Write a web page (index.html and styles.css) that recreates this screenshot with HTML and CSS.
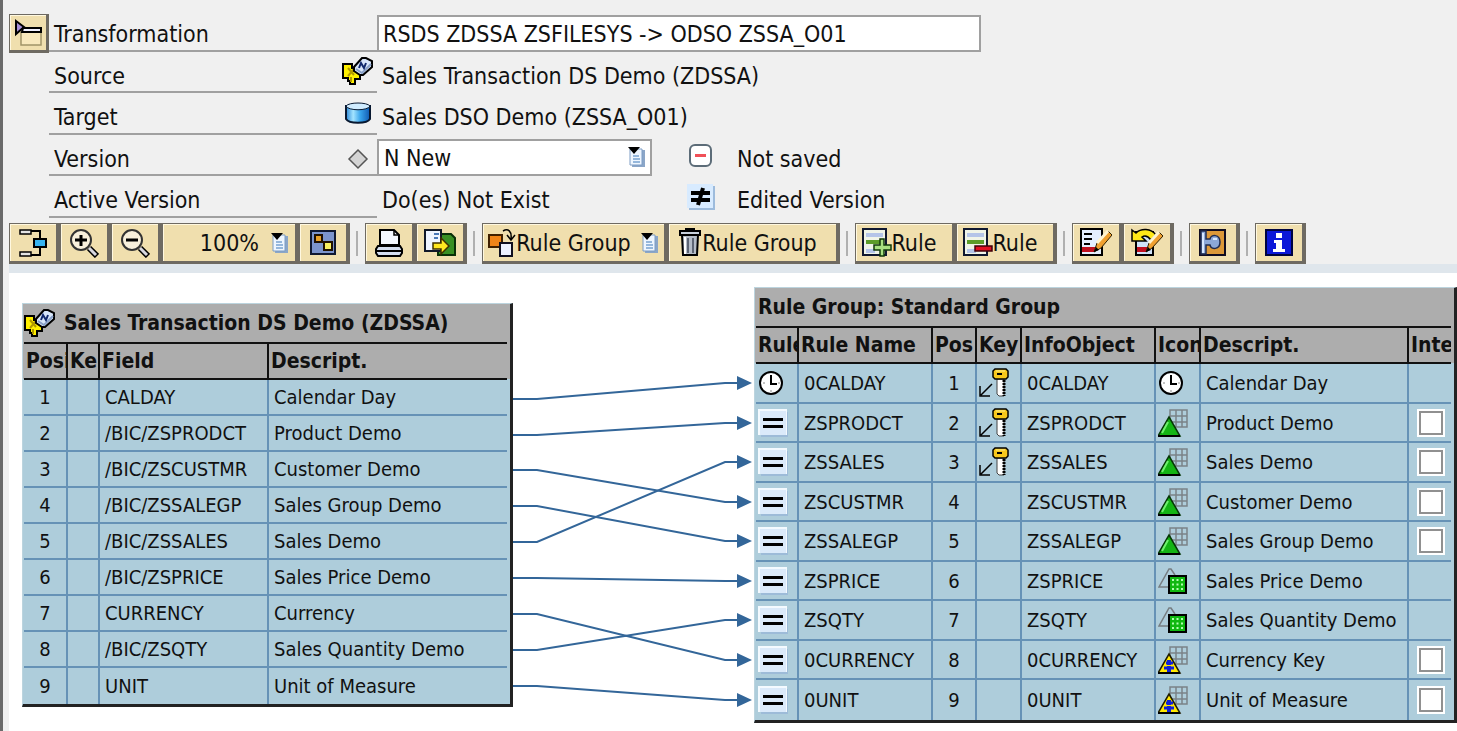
FILE: index.html
```html
<!DOCTYPE html>
<html lang="en">
<head>
    <meta charset="UTF-8">
    <meta name="viewport" content="width=device-width, initial-scale=1.0">
    <title>Transformation RSDS ZDSSA ZSFILESYS</title>
    <link rel="stylesheet" href="styles.css">
</head>
<body>

    <!-- Icons that are used more than once -->
    <svg class="sprite" aria-hidden="true">
        <symbol id="datasource" viewBox="0 0 32 29">
            <path d="M1 7h9v4h8v11h-5v5h-5v-3H6v-3H1z" fill="#fff000" stroke="#000" stroke-width="2"/>
            <path d="M6 11l6 7M12 12l-6 7M9 20v5" fill="none" stroke="#b09800" stroke-width="2"/>
            <path d="M20 1h4l6 3v6l-9 8h-3l-6-4v-4z" fill="#d8e6fa" stroke="#000" stroke-width="2"/>
            <path d="M29 7l-9 9-6-4" fill="none" stroke="#88a0c8" stroke-width="2"/>
            <path d="M17 11l2-5 3 5 2-5" fill="none" stroke="#10286c" stroke-width="2"/>
        </symbol>
        <symbol id="list" viewBox="0 0 18 22">
            <path d="M5 4h12v17H4z" fill="#8ba6c8"/>
            <path d="M2 3h12v16H2z" fill="#eef6ff" stroke="#7c9cc4" stroke-width="1"/>
            <path d="M5 10h6M5 13h7M5 16h7" stroke="#3c78b8" stroke-width="1"/>
            <path d="M0 1h12L6 8z" fill="#000"/>
        </symbol>
        <symbol id="clock" viewBox="0 0 26 26">
            <circle cx="13" cy="13" r="11" fill="#fff" stroke="#000" stroke-width="2"/>
            <path d="M13 5v9h6" fill="none" stroke="#000" stroke-width="2"/>
            <path d="M13 22v-2M5 13h2M20 13h2" stroke="#888" stroke-width="1"/>
        </symbol>
        <symbol id="equal" viewBox="0 0 30 28">
            <path d="M3 3h27v25H3z" fill="#9dbbd8"/>
            <path d="M0 0h29v26H0z" fill="#f4faff"/>
            <path d="M2 2h26v24H2z" fill="#dbeafa"/>
            <path d="M5 10.500h20M5 17.500h20" stroke="#000" stroke-width="3"/>
        </symbol>
        <symbol id="key" viewBox="0 0 30 30">
            <path d="M13 16L2 27M1 18v10h10" fill="none" stroke="#000" stroke-width="1.500"/>
            <path d="M18 11h7v17h-5l-2-2z" fill="#fff" stroke="#444" stroke-width="1"/>
            <path d="M25 12v16" stroke="#000" stroke-width="3" stroke-dasharray="2 1"/>
            <path d="M16 1h11l2 2v6l-2 2H16l-2-2V3z" fill="#f8c81c" stroke="#000" stroke-width="1.500"/>
            <path d="M17 3h9" stroke="#fff090" stroke-width="1"/>
            <path d="M18 5h5v2h-5z" fill="#000"/>
        </symbol>
        <symbol id="characteristic" viewBox="0 0 30 28">
            <path d="M12 1h17v17H12zM18 1v17M24 1v17M12 7h17M12 13h17" fill="none" stroke="#7b8288" stroke-width="1.500"/>
            <path d="M11 8l11 19H0z" fill="#14b414" stroke="#063806" stroke-width="1.500"/>
            <path d="M10 13L4 24" stroke="#70f070" stroke-width="2"/>
            <path d="M0 27h22" stroke="#000" stroke-width="2"/>
        </symbol>
        <symbol id="keyfigure" viewBox="0 0 30 28">
            <path d="M10 20H1L11 2h2l4 6" fill="none" stroke="#777d82" stroke-width="1.500"/>
            <path d="M11 9h17v17H11z" fill="#10b810" stroke="#000" stroke-width="2"/>
            <path d="M14 13h12M14 17.500h12M14 22h12" stroke="#b0ffb0" stroke-width="2" stroke-dasharray="2 2.500"/>
        </symbol>
        <symbol id="unit" viewBox="0 0 30 28">
            <path d="M12 1h17v17H12zM18 1v17M24 1v17M12 7h17M12 13h17" fill="none" stroke="#7b8288" stroke-width="1.500"/>
            <path d="M11 8l11 19H0z" fill="#ffe800" stroke="#201c00" stroke-width="1.500"/>
            <path d="M11 14v12" stroke="#1020d8" stroke-width="4"/>
            <path d="M8 17h7M6 22h10" stroke="#1020d8" stroke-width="3"/>
            <path d="M8 19.500h7" stroke="#ffe800" stroke-width="1"/>
            <path d="M0 27h22" stroke="#000" stroke-width="2"/>
        </symbol>
    </svg>

    <header class="properties">
        <div class="prop-row">
            <button class="tool tool-small" type="button" aria-label="Switch display">
                <svg width="28" height="28" viewBox="0 0 28 28">
                    <path d="M7 13v13h20V13" fill="#f8e8bc" stroke="#a09468" stroke-width="1.500"/>
                    <path d="M2 2l8 6-8 7z" fill="#a890d8" stroke="#000" stroke-width="2"/>
                    <path d="M9 9h18v4H8z" fill="#f0f0ff" stroke="#000" stroke-width="2"/>
                </svg>
            </button>
            <label class="prop-label" for="transformation">Transformation</label>
            <input class="prop-input" id="transformation" type="text" value="RSDS ZDSSA ZSFILESYS -&gt; ODSO ZSSA_O01" readonly>
        </div>
        <div class="prop-row">
            <div class="prop-label">Source <svg width="32" height="29"><use href="#datasource"/></svg></div>
            <span class="prop-value">Sales Transaction DS Demo (ZDSSA)</span>
        </div>
        <div class="prop-row">
            <div class="prop-label">Target
                <svg class="icon-cube" width="26" height="22" viewBox="0 0 26 22">
                    <defs>
                        <linearGradient id="cube">
                            <stop offset="0" stop-color="#2c88d8"/>
                            <stop offset=".3" stop-color="#a4e4ff"/>
                            <stop offset=".6" stop-color="#38a4ec"/>
                            <stop offset="1" stop-color="#1058b0"/>
                        </linearGradient>
                    </defs>
                    <path d="M1 4v13c3 5 21 5 24 0V4z" fill="url(#cube)" stroke="#081830" stroke-width="2"/>
                    <path d="M1 4c3-4 21-4 24 0-2 5-22 5-24 0z" fill="#d0ecff" stroke="#081830" stroke-width="1"/>
                </svg>
            </div>
            <span class="prop-value">Sales DSO Demo (ZSSA_O01)</span>
        </div>
        <div class="prop-row">
            <label class="prop-label" for="version">Version
                <svg class="icon-state" width="22" height="22" viewBox="0 0 22 22">
                    <path d="M11 2l9 9-9 9-9-9z" fill="#d4d4d4" stroke="#555" stroke-width="1.500"/>
                </svg>
            </label>
            <div class="select-wrap">
                <select id="version">
                    <option>N New</option>
                </select>
                <svg class="select-icon" width="18" height="22"><use href="#list"/></svg>
            </div>
            <svg class="status-icon" width="28" height="26" viewBox="0 0 28 26">
                <rect x="3" y="2" width="21" height="21" rx="5" fill="#fff" stroke="#5c6c78" stroke-width="2"/>
                <path d="M8 12.500h11" stroke="#f05058" stroke-width="3"/>
            </svg>
            <span class="status-text">Not saved</span>
        </div>
        <div class="prop-row">
            <div class="prop-label">Active Version</div>
            <span class="prop-value prop-fixed">Do(es) Not Exist</span>
            <svg class="status-icon" width="28" height="26" viewBox="0 0 28 26">
                <path d="M2 2h26v24H2z" fill="#9dbbdc"/>
                <path d="M0 0h26v24H0z" fill="#d8ebff"/>
                <path d="M4 9h19M4 16h19" stroke="#000" stroke-width="4"/>
                <path d="M16 4l-5 17" stroke="#000" stroke-width="4"/>
            </svg>
            <span class="status-text">Edited Version</span>
        </div>
    </header>

    <nav class="toolbar" aria-label="Transformation tools">
        <div class="group">
            <button class="tool" type="button" aria-label="Navigation">
                <svg width="30" height="30" viewBox="0 0 30 30">
                    <path d="M13 3h9v8M22 19v8h-9" fill="none" stroke="#000" stroke-width="2"/>
                    <path d="M2 2h11v4H2zM2 24h11v4H2z" fill="#e4e4e4" stroke="#000" stroke-width="1.500"/>
                    <path d="M16 11h12v8H16z" fill="#38b4f0" stroke="#000" stroke-width="2"/>
                </svg>
            </button>
            <button class="tool" type="button" aria-label="Zoom in">
                <svg width="30" height="30" viewBox="0 0 30 30">
                    <path d="M20 20l8 8" stroke="#000" stroke-width="6"/>
                    <path d="M20 20l7 7" stroke="#d8d8e0" stroke-width="3"/>
                    <circle cx="12" cy="12" r="10" fill="#f8f0dc" stroke="#333" stroke-width="2"/>
                    <path d="M12 7v11M6 12h12" stroke="#000" stroke-width="3"/>
                </svg>
            </button>
            <button class="tool" type="button" aria-label="Zoom out">
                <svg width="30" height="30" viewBox="0 0 30 30">
                    <path d="M20 20l8 8" stroke="#000" stroke-width="6"/>
                    <path d="M20 20l7 7" stroke="#d8d8e0" stroke-width="3"/>
                    <circle cx="12" cy="12" r="10" fill="#f8f0dc" stroke="#333" stroke-width="2"/>
                    <path d="M6 12h12" stroke="#000" stroke-width="3"/>
                </svg>
            </button>
            <button class="tool tool-zoom" type="button">100% <svg width="18" height="22"><use href="#list"/></svg></button>
            <button class="tool" type="button" aria-label="Overview">
                <svg width="26" height="26" viewBox="0 0 26 26">
                    <path d="M1 1h24v23H1z" fill="#7c94cc" stroke="#101830" stroke-width="2"/>
                    <path d="M5 5h7v7H5z" fill="#e8a028" stroke="#201000" stroke-width="2"/>
                    <path d="M14 12h8v8h-8z" fill="#f8f060" stroke="#201000" stroke-width="2"/>
                </svg>
            </button>
        </div>
        <span class="separator"></span>
        <div class="group">
            <button class="tool" type="button" aria-label="Print">
                <svg width="28" height="30" viewBox="0 0 28 30">
                    <path d="M5 17V2h14l5 5v10z" fill="#f4f8ff" stroke="#000" stroke-width="2"/>
                    <path d="M19 2v5h5" fill="none" stroke="#000" stroke-width="1.500"/>
                    <path d="M3 18h22l2 3v4l-2 3H3l-2-3v-4z" fill="#d4def0" stroke="#000" stroke-width="2"/>
                    <path d="M1 23h26" stroke="#000" stroke-width="2"/>
                </svg>
            </button>
            <button class="tool" type="button" aria-label="Export">
                <svg width="32" height="30" viewBox="0 0 32 30">
                    <path d="M14 6h13l4 4v17H14z" fill="#389024" stroke="#083008" stroke-width="2"/>
                    <path d="M1 2h16v21H1z" fill="#eef4ff" stroke="#101828" stroke-width="2"/>
                    <path d="M10 6h5M10 10h4" stroke="#4878b8" stroke-width="2"/>
                    <path d="M9 15h8v-5l8 8-8 8v-5H9z" fill="#ffe820" stroke="#403000" stroke-width="1.500"/>
                </svg>
            </button>
        </div>
        <span class="separator"></span>
        <div class="group">
            <button class="tool tool-create" type="button">
                <svg width="28" height="30" viewBox="0 0 28 30">
                    <path d="M1 7h13v12H1z" fill="#f08418" stroke="#402000" stroke-width="2"/>
                    <path d="M12 15h12v13H12z" fill="#eef2ff" stroke="#101020" stroke-width="2"/>
                    <path d="M15 3c5-3 9 0 8 8M19 7l4 5 4-5" fill="none" stroke="#000" stroke-width="1.500"/>
                </svg>Rule Group
                <svg class="list-icon" width="18" height="22"><use href="#list"/></svg>
            </button>
            <button class="tool tool-delete" type="button">
                <svg width="24" height="30" viewBox="0 0 24 30">
                    <path d="M4 7h16l-1 20H5z" fill="#b4bcc8" stroke="#000" stroke-width="2"/>
                    <path d="M10 10v15M15 10v15" stroke="#5c6474" stroke-width="2"/>
                    <path d="M7 9v17" stroke="#fff" stroke-width="2"/>
                    <path d="M2 3h20v4H2z" fill="#c8d0dc" stroke="#000" stroke-width="2"/>
                    <path d="M8 3V1h8v2" fill="none" stroke="#000" stroke-width="2"/>
                </svg>Rule Group
            </button>
        </div>
        <span class="separator"></span>
        <div class="group">
            <button class="tool tool-rule" type="button">
                <svg width="30" height="30" viewBox="0 0 30 30">
                    <path d="M1 1h23v26H1z" fill="#f0f4e8" stroke="#101830" stroke-width="2"/>
                    <path d="M4 7h17M4 23h9" stroke="#b4c4e8" stroke-width="4"/>
                    <path d="M4 14h17" stroke="#5c9c28" stroke-width="4"/>
                    <path d="M18 11h4v6h7v5h-7v6h-4v-6h-6v-5h6z" fill="#a8e080" stroke="#103808" stroke-width="1.500"/>
                </svg>Rule
            </button>
            <button class="tool tool-rule" type="button">
                <svg width="30" height="30" viewBox="0 0 30 30">
                    <path d="M1 1h23v26H1z" fill="#f0f4e8" stroke="#101830" stroke-width="2"/>
                    <path d="M4 7h17M4 23h9" stroke="#b4c4e8" stroke-width="4"/>
                    <path d="M4 14h17" stroke="#5c9c28" stroke-width="4"/>
                    <path d="M12 18h17v5H12z" fill="#e01020" stroke="#400008" stroke-width="1.500"/>
                </svg>Rule
            </button>
        </div>
        <span class="separator"></span>
        <div class="group">
            <button class="tool" type="button" aria-label="Start routine">
                <svg width="32" height="30" viewBox="0 0 32 30">
                    <path d="M1 1h21v26H1z" fill="#e4eeff" stroke="#000" stroke-width="2"/>
                    <path d="M4 6h8M4 11h8M4 16h6" stroke="#000" stroke-width="2"/>
                    <path d="M2 19h13v5H2z" fill="#c01020"/>
                    <path d="M14 24l3-9L28 3l4 4-11 13z" fill="#f0a030" stroke="#302000" stroke-width="1"/>
                    <path d="M17 15L28 3" fill="none" stroke="#fff4d0" stroke-width="3"/>
                    <path d="M14 24l2-5 3 3z" fill="#000"/>
                </svg>
            </button>
            <button class="tool" type="button" aria-label="End routine">
                <svg width="32" height="30" viewBox="0 0 32 30">
                    <path d="M5 4h17v23H5z" fill="#cfe2f8" stroke="#000" stroke-width="2"/>
                    <path d="M6 19h10v5H6z" fill="#c01020"/>
                    <path d="M1 2l4 3c5-5 15-5 20 2l-5 5c-3-4-6-5-9-3l4 4H1z" fill="#ffe818" stroke="#000" stroke-width="1.500"/>
                    <path d="M15 24l3-9L28 4l4 4-11 12z" fill="#f0a030" stroke="#302000" stroke-width="1"/>
                    <path d="M18 15l10-11" fill="none" stroke="#fff4d0" stroke-width="3"/>
                    <path d="M15 24l2-5 3 3z" fill="#000"/>
                </svg>
            </button>
        </div>
        <span class="separator"></span>
        <div class="group">
            <button class="tool" type="button" aria-label="Expert routine">
                <svg width="28" height="28" viewBox="0 0 28 28">
                    <path d="M1 1h25v25H1z" fill="#dc9838" stroke="#100c20" stroke-width="2"/>
                    <path d="M2 2h5v8h4c1-5 10-5 10 3s-9 8-10 3H7v9H2z" fill="#8ca8d8" stroke="#202c50" stroke-width="1.500"/>
                    <path d="M14 10h4M4 4v20" stroke="#d8e8ff" stroke-width="2"/>
                </svg>
            </button>
        </div>
        <span class="separator"></span>
        <div class="group">
            <button class="tool" type="button" aria-label="Information">
                <svg width="28" height="28" viewBox="0 0 28 28">
                    <path d="M1 1h26v25H1z" fill="#0c18d8" stroke="#000440" stroke-width="2"/>
                    <path d="M11 4h6v5h-6zM9 11h8v9h3v3H8v-3h3v-6H9z" fill="#fff"/>
                </svg>
            </button>
        </div>
    </nav>

    <main class="canvas">
        <section class="panel source">
            <h2><svg width="32" height="29"><use href="#datasource"/></svg>Sales Transaction DS Demo (ZDSSA)</h2>
            <table>
                <colgroup><col class="c-pos"><col class="c-key"><col class="c-field"><col></colgroup>
                <thead>
                    <tr><th>Posi</th><th>Ke</th><th>Field</th><th>Descript.</th></tr>
                </thead>
                <tbody>
                    <tr><td>1</td><td></td><td>CALDAY</td><td>Calendar Day</td></tr>
                    <tr><td>2</td><td></td><td>/BIC/ZSPRODCT</td><td>Product Demo</td></tr>
                    <tr><td>3</td><td></td><td>/BIC/ZSCUSTMR</td><td>Customer Demo</td></tr>
                    <tr><td>4</td><td></td><td>/BIC/ZSSALEGP</td><td>Sales Group Demo</td></tr>
                    <tr><td>5</td><td></td><td>/BIC/ZSSALES</td><td>Sales Demo</td></tr>
                    <tr><td>6</td><td></td><td>/BIC/ZSPRICE</td><td>Sales Price Demo</td></tr>
                    <tr><td>7</td><td></td><td>CURRENCY</td><td>Currency</td></tr>
                    <tr><td>8</td><td></td><td>/BIC/ZSQTY</td><td>Sales Quantity Demo</td></tr>
                    <tr><td>9</td><td></td><td>UNIT</td><td>Unit of Measure</td></tr>
                </tbody>
            </table>
        </section>

        <!-- Field to rule connections -->
        <svg class="links" viewBox="0 0 241 435" preserveAspectRatio="none" aria-hidden="true">
            <defs>
                <marker id="arrow" markerUnits="userSpaceOnUse" markerWidth="15" markerHeight="14" refX="0" refY="7">
                    <path d="M0 0l15 7-15 7z" fill="#336699"/>
                </marker>
            </defs>
            <path d="M0 112h24L212 96h12"/>
            <path d="M0 148h24L212 136h12"/>
            <path d="M0 183h24L212 215h12"/>
            <path d="M0 219h24L212 254h12"/>
            <path d="M0 255h24L212 175h12"/>
            <path d="M0 291h24L212 294h12"/>
            <path d="M0 327h24L212 373h12"/>
            <path d="M0 363h24L212 333h12"/>
            <path d="M0 399h24L212 413h12"/>
        </svg>

        <section class="panel target">
            <h2>Rule Group: Standard Group</h2>
            <table>
                <colgroup><col class="c-rule"><col class="c-name"><col class="c-pos"><col class="c-icon"><col class="c-name"><col class="c-icon"><col><col class="c-int"></colgroup>
                <thead>
                    <tr><th>Rule</th><th>Rule Name</th><th>Pos</th><th>Key</th><th>InfoObject</th><th>Icon</th><th>Descript.</th><th>Inte</th></tr>
                </thead>
                <tbody>
                    <tr>
                        <td><svg width="26" height="26"><use href="#clock"/></svg></td>
                        <td>0CALDAY</td><td>1</td>
                        <td><svg width="30" height="30"><use href="#key"/></svg></td>
                        <td>0CALDAY</td>
                        <td><svg width="26" height="26"><use href="#clock"/></svg></td>
                        <td>Calendar Day</td><td></td>
                    </tr>
                    <tr>
                        <td><svg width="30" height="28"><use href="#equal"/></svg></td>
                        <td>ZSPRODCT</td><td>2</td>
                        <td><svg width="30" height="30"><use href="#key"/></svg></td>
                        <td>ZSPRODCT</td>
                        <td><svg width="30" height="28"><use href="#characteristic"/></svg></td>
                        <td>Product Demo</td>
                        <td><input type="checkbox" aria-label="Integrity ZSPRODCT"></td>
                    </tr>
                    <tr>
                        <td><svg width="30" height="28"><use href="#equal"/></svg></td>
                        <td>ZSSALES</td><td>3</td>
                        <td><svg width="30" height="30"><use href="#key"/></svg></td>
                        <td>ZSSALES</td>
                        <td><svg width="30" height="28"><use href="#characteristic"/></svg></td>
                        <td>Sales Demo</td>
                        <td><input type="checkbox" aria-label="Integrity ZSSALES"></td>
                    </tr>
                    <tr>
                        <td><svg width="30" height="28"><use href="#equal"/></svg></td>
                        <td>ZSCUSTMR</td><td>4</td><td></td>
                        <td>ZSCUSTMR</td>
                        <td><svg width="30" height="28"><use href="#characteristic"/></svg></td>
                        <td>Customer Demo</td>
                        <td><input type="checkbox" aria-label="Integrity ZSCUSTMR"></td>
                    </tr>
                    <tr>
                        <td><svg width="30" height="28"><use href="#equal"/></svg></td>
                        <td>ZSSALEGP</td><td>5</td><td></td>
                        <td>ZSSALEGP</td>
                        <td><svg width="30" height="28"><use href="#characteristic"/></svg></td>
                        <td>Sales Group Demo</td>
                        <td><input type="checkbox" aria-label="Integrity ZSSALEGP"></td>
                    </tr>
                    <tr>
                        <td><svg width="30" height="28"><use href="#equal"/></svg></td>
                        <td>ZSPRICE</td><td>6</td><td></td>
                        <td>ZSPRICE</td>
                        <td><svg width="30" height="28"><use href="#keyfigure"/></svg></td>
                        <td>Sales Price Demo</td><td></td>
                    </tr>
                    <tr>
                        <td><svg width="30" height="28"><use href="#equal"/></svg></td>
                        <td>ZSQTY</td><td>7</td><td></td>
                        <td>ZSQTY</td>
                        <td><svg width="30" height="28"><use href="#keyfigure"/></svg></td>
                        <td>Sales Quantity Demo</td><td></td>
                    </tr>
                    <tr>
                        <td><svg width="30" height="28"><use href="#equal"/></svg></td>
                        <td>0CURRENCY</td><td>8</td><td></td>
                        <td>0CURRENCY</td>
                        <td><svg width="30" height="28"><use href="#unit"/></svg></td>
                        <td>Currency Key</td>
                        <td><input type="checkbox" aria-label="Integrity 0CURRENCY"></td>
                    </tr>
                    <tr>
                        <td><svg width="30" height="28"><use href="#equal"/></svg></td>
                        <td>0UNIT</td><td>9</td><td></td>
                        <td>0UNIT</td>
                        <td><svg width="30" height="28"><use href="#unit"/></svg></td>
                        <td>Unit of Measure</td>
                        <td><input type="checkbox" aria-label="Integrity 0UNIT"></td>
                    </tr>
                </tbody>
            </table>
        </section>
    </main>

</body>
</html>
```

FILE: styles.css
```css
:root {
    --window: #f0f0f0;
    --button: #f0dfae;
    --button-edge: #6e6a62;
    --rule-line: #a0a0a0;
    --panel-head: #adadad;
    --panel-body: #aecddb;
    --grid-line: #6692b6;
    --link: #336699;
}

* {
    box-sizing: border-box;
}

body {
    margin: 0;
    min-height: 100vh;
    display: flex;
    flex-direction: column;
    background: var(--window);
    border-left: 3px solid #6a6a6a;
    color: #111;
    font-family: "DejaVu Sans Condensed", "DejaVu Sans", sans-serif;
    font-size: 23px;
}

input,
select,
button {
    font: inherit;
    color: inherit;
}

svg {
    display: block;
    flex: none;
}

.sprite {
    position: absolute;
    width: 0;
    height: 0;
}

/* Properties */
.properties {
    padding: 10px 6px 0;
}

.prop-row {
    display: flex;
    align-items: stretch;
    height: 42px;
    padding-left: 40px;
}

.prop-row:first-child {
    padding-left: 0;
}

.prop-row:nth-child(even) {
    height: 41px;
}

.prop-label {
    flex: 0 0 328px;
    display: flex;
    justify-content: space-between;
    align-items: center;
    padding: 8px 3px 0 5px;
    border-bottom: 2px solid var(--rule-line);
}

.prop-label svg {
    margin-top: -8px;
}

.prop-label .icon-cube {
    margin-right: 3px;
}

.prop-label .icon-state {
    margin: 0 5px 0 0;
}

.prop-value {
    padding: 6px 5px 0;
    align-self: center;
}

.prop-fixed {
    flex: 0 0 310px;
}

.prop-input {
    flex: 0 1 604px;
    margin-top: 5px;
    padding: 0 4px;
    border: 2px solid var(--rule-line);
    background: #fff;
    min-width: 0;
}

.select-wrap {
    position: relative;
    display: flex;
    flex: 0 0 275px;
    margin: 4px 35px 0 0;
}

.select-wrap select {
    appearance: none;
    width: 100%;
    padding: 0 5px;
    border: 2px solid var(--rule-line);
    border-radius: 0;
    background: #fff;
}

.select-icon {
    position: absolute;
    top: 7px;
    right: 6px;
    pointer-events: none;
}

.status-icon {
    align-self: center;
    margin-right: 22px;
}

.status-text {
    align-self: center;
    padding-top: 6px;
}

/* Toolbar */
.toolbar {
    display: flex;
    align-items: center;
    margin-top: 5px;
    padding-left: 6px;
}

.group {
    display: flex;
}

.separator {
    width: 2px;
    height: 25px;
    margin: 0 7px 0 6px;
    background: #b0b0b0;
}

.tool {
    display: flex;
    align-items: center;
    justify-content: center;
    width: 51px;
    height: 41px;
    padding: 0;
    border: 1px solid var(--button-edge);
    border-width: 1px 4px 3px 1px;
    background: var(--button);
    box-shadow: inset 1px 1px #fff8e0;
    white-space: nowrap;
}

.tool-small {
    width: 40px;
    height: 39px;
    margin-top: 4px;
    border-width: 1px 3px 3px 1px;
}

.tool-zoom {
    width: 137px;
    gap: 12px;
    padding-right: 6px;
    justify-content: flex-end;
}

.tool-create {
    width: 186px;
}

.list-icon {
    margin-left: 10px;
}

.tool-delete {
    width: 172px;
    padding-right: 10px;
}

.tool-rule {
    width: 101px;
    padding-right: 10px;
}

/* Mapping canvas */
.canvas {
    flex: 1;
    display: grid;
    grid-template-columns: 491fr 241fr 703fr;
    align-items: start;
    margin: 0 0 0 6px;
    padding: 14px 0 9px 13px;
    border-top: 9px solid #dfe6ec;
    background: #fff;
}

.panel {
    border: 1px solid #bcd4de;
    border-right: 3px solid #222;
    border-bottom: 3px solid #222;
    padding: 0 3px 0 1px;
    background: linear-gradient(var(--panel-head) 75px, var(--panel-body) 75px);
    font-size: 20px;
}

.source {
    margin-top: 16px;
}

.panel h2 {
    display: flex;
    align-items: center;
    gap: 8px;
    height: 38px;
    margin: 0;
    font-size: 21px;
    white-space: nowrap;
}

.target h2 {
    padding-left: 2px;
}

.panel table {
    width: 100%;
    table-layout: fixed;
    border-collapse: separate;
    border-spacing: 0;
}

.panel th {
    height: 38px;
    padding: 0 0 0 2px;
    border: 0 solid #111;
    border-width: 2px 2px 2px 0;
    text-align: left;
    font-size: 21px;
    overflow: hidden;
    white-space: nowrap;
}

.panel td {
    height: 36px;
    padding: 0 5px;
    border: 0 solid var(--grid-line);
    border-width: 0 2px 2px 0;
    overflow: hidden;
    white-space: nowrap;
}

.panel th:last-child,
.panel td:last-child {
    border-right: 0;
}

.panel tr:last-child td {
    border-bottom: 0;
}

.source td:first-child,
.target td:nth-child(3) {
    text-align: center;
}

.target td {
    height: 40px;
}

.target tr:nth-child(even) td {
    height: 39px;
}

.target td:nth-child(1),
.target td:nth-child(4),
.target td:nth-child(6) {
    padding: 0 2px;
}

.c-pos { width: 44px; }
.c-key { width: 32px; }
.c-field { width: 169px; }
.c-rule { width: 43px; }
.c-name { width: 134px; }
.c-icon { width: 45px; }
.c-int { width: 42px; }

.panel input {
    appearance: none;
    display: block;
    width: 24px;
    height: 24px;
    margin: 0 0 0 5px;
    border: 2px solid #909090;
    background: #fff;
    box-shadow: 0 0 0 2px #fff;
}

.panel input:checked {
    background: #336699;
}

.links {
    width: 100%;
    height: 435px;
    overflow: visible;
}

.links > path {
    fill: none;
    stroke: var(--link);
    stroke-width: 2;
    marker-end: url(#arrow);
}
```
